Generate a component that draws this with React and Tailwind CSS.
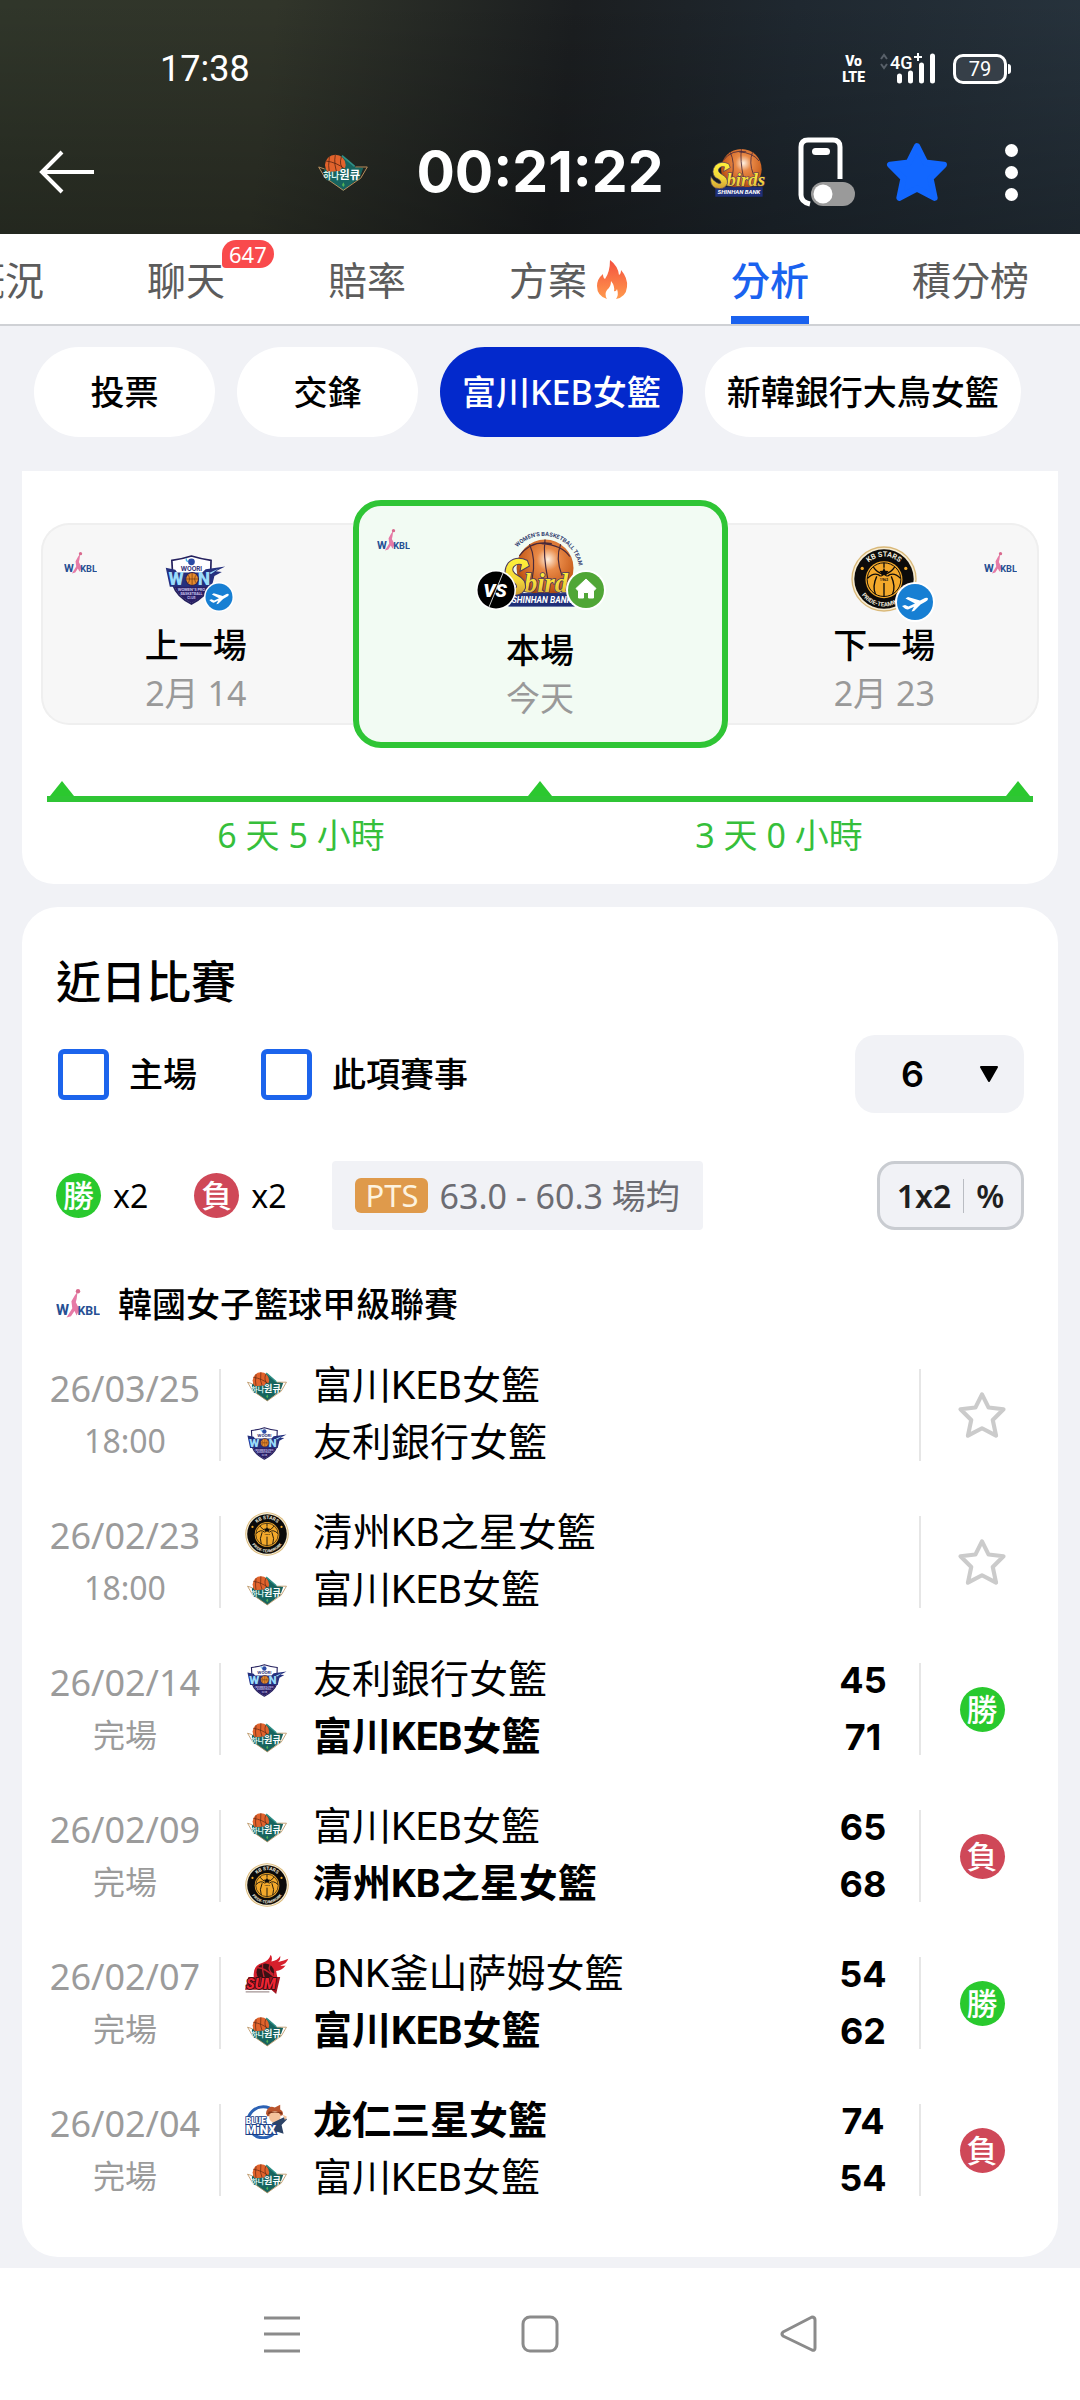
import React from "react";

const NAME_FONT = "font-[Roboto,'Noto_Sans_CJK_TC',sans-serif]";
const SCORE_FONT = "font-[Inter,sans-serif]";

/* ---------- logos ---------- */

function HanaLogo({ className }) {
  return (
    <svg viewBox="0 0 150 116" className={className} aria-hidden="true">
      <path d="M18 52 L60 8 L78 12 L112 42 L136 44 L124 78 L112 84 L76 113 L36 84 L22 74Z" fill="#17645f" />
      <path d="M20 48 L2 42 L22 76 L36 84 L76 112 L116 84 L128 76 L148 42 L112 42" fill="none" stroke="#b98f5c" strokeWidth="3" />
      <path d="M72 8 L110 40" stroke="#2f8f86" strokeWidth="5" />
      <circle cx="52" cy="36" r="31" fill="#e2632c" />
      <path d="M52 5 Q46 36 60 66 M24 24 Q56 28 80 48 M34 12 Q30 40 34 58 M70 12 Q62 36 78 50" stroke="#5b2512" strokeWidth="2.5" fill="none" />
      <path d="M18 58 L66 54 L70 46 L128 44 L120 82 L26 82Z" fill="#17645f" />
      <text x="16" y="79" fontSize="26" fontWeight="700" fill="#d9f3ee" fontFamily="'Noto Sans CJK KR', sans-serif">하나</text>
      <text x="64" y="79" fontSize="34" fontWeight="700" fill="#ffffff" fontFamily="'Noto Sans CJK KR', sans-serif">원큐</text>
      <path d="M76 88 l4 8 -4 6 -4 -6Z" fill="#52b557" />
    </svg>
  );
}

function WooriLogo({ className }) {
  return (
    <svg viewBox="0 0 180 148" className={className} aria-hidden="true">
      <path d="M20 16 Q50 12 78 3 Q108 12 136 16 L134 90 Q122 122 78 145 Q34 122 24 90Z" fill="#ffffff" stroke="#25215e" strokeWidth="5" />
      <path d="M24 86 L134 86 Q122 122 78 143 Q36 122 24 86Z" fill="#2a1f66" />
      <circle cx="78" cy="20" r="10" fill="#2a4aa5" />
      <path d="M68 20 Q60 16 64 10" stroke="#4ab4e8" strokeWidth="4" fill="none" />
      <text x="78" y="46" fontSize="18" fontWeight="700" textAnchor="middle" fill="#2a2a74" fontFamily="Inter, sans-serif">WOORI</text>
      <path d="M2 38 L30 44 L36 52 L110 52 L120 42 L178 34 L150 48 L168 50 L146 62 L138 94 L14 94Z" fill="#25307e" />
      <text x="10" y="90" fontSize="52" fontWeight="900" fill="#9bdcfb" fontFamily="Roboto, sans-serif">W</text>
      <text x="97" y="90" fontSize="52" fontWeight="900" fill="#9bdcfb" fontFamily="Roboto, sans-serif">N</text>
      <path d="M130 53 L158 41 L136 56Z" fill="#9bdcfb" />
      <circle cx="80" cy="71" r="19" fill="#e58a2c" stroke="#25215e" strokeWidth="3" />
      <path d="M61 71 H99 M80 52 V90 M67 58 Q78 71 67 84 M93 58 Q82 71 93 84" stroke="#6b3412" strokeWidth="2" fill="none" />
      <text x="78" y="108" fontSize="11" fontWeight="700" textAnchor="middle" fill="#c9c6ee" fontFamily="Inter, sans-serif">WOMEN'S PRO</text>
      <text x="78" y="119" fontSize="10" fontWeight="700" textAnchor="middle" fill="#c9c6ee" fontFamily="Inter, sans-serif">BASKETBALL</text>
      <text x="78" y="130" fontSize="9" fontWeight="700" textAnchor="middle" fill="#c9c6ee" fontFamily="Inter, sans-serif">CLUB</text>
    </svg>
  );
}

function KbStarsLogo({ className, id }) {
  return (
    <svg viewBox="0 0 200 200" className={className} aria-hidden="true">
      <defs>
        <path id={id + "t"} d="M32 100 A68 68 0 0 1 168 100" />
        <path id={id + "b"} d="M17 100 A83 83 0 0 0 183 100" />
      </defs>
      <circle cx="100" cy="100" r="99" fill="#d9b878" />
      <circle cx="100" cy="100" r="95" fill="#f7ecd2" />
      <circle cx="100" cy="100" r="90" fill="#0c0b0a" />
      <text fontSize="22" fontWeight="700" fill="#efe9dc" fontFamily="Roboto, sans-serif" textAnchor="middle">
        <textPath href={"#" + id + "t"} startOffset="50%">KB STARS</textPath>
      </text>
      <text fontSize="18" fontWeight="700" fill="#efe9dc" fontFamily="Roboto, sans-serif" textAnchor="middle">
        <textPath href={"#" + id + "b"} startOffset="50%">PRIDE-TEAMWORK</textPath>
      </text>
      <circle cx="34" cy="68" r="5" fill="#f3a92b" />
      <circle cx="166" cy="68" r="5" fill="#f3a92b" />
      <circle cx="100" cy="102" r="56" fill="#f3a92b" />
      <circle cx="100" cy="102" r="51" fill="none" stroke="#0c0b0a" strokeWidth="3" />
      <path d="M100 51 V66 M100 112 V153 M68 64 Q78 80 98 86 M132 64 Q122 80 102 86 M50 98 Q72 76 90 92 M150 98 Q128 76 110 92 M74 146 Q64 122 78 92 M126 146 Q136 122 122 92" stroke="#0c0b0a" strokeWidth="4" fill="none" />
      <path d="M100 66 l4 9 10 1 -7 7 2 10 -9 -5 -9 5 2 -10 -7 -7 10 -1Z" fill="#0c0b0a" />
      <text x="100" y="105" fontSize="11" fontWeight="700" textAnchor="middle" fill="#0c0b0a" fontFamily="Roboto, sans-serif">1963</text>
    </svg>
  );
}

function SbirdsLogo({ className, id, ring }) {
  return (
    <svg viewBox={ring ? "0 0 245 236" : "0 26 232 210"} className={className} aria-hidden="true">
      <defs>
        <radialGradient id={id + "g"} cx="55%" cy="35%" r="65%">
          <stop offset="0" stopColor="#fff1e2" />
          <stop offset="0.3" stopColor="#e98a48" />
          <stop offset="0.8" stopColor="#c65a18" />
          <stop offset="1" stopColor="#8e3d10" />
        </radialGradient>
        <linearGradient id={id + "y"} x1="0" y1="0" x2="0" y2="1">
          <stop offset="0" stopColor="#fff23a" />
          <stop offset="0.6" stopColor="#f2d63a" />
          <stop offset="1" stopColor="#cf9d33" />
        </linearGradient>
        <path id={id + "a"} d="M40 66 A106 106 0 0 1 231 124" />
      </defs>
      {ring && (
        <text fontSize="17" fontWeight="700" fill="#33406f" fontFamily="Roboto, sans-serif" textAnchor="middle">
          <textPath href={"#" + id + "a"} startOffset="50%">WOMEN'S BASKETBALL TEAM</textPath>
        </text>
      )}
      <circle cx="130" cy="118" r="84" fill={"url(#" + id + "g)"} />
      <path d="M130 34 Q124 80 138 150 M84 48 Q104 90 92 150 M176 48 Q160 90 180 140 M54 82 Q90 34 150 46 M203 84 Q180 50 120 46" stroke="#4a2a3a" strokeWidth="3.5" fill="none" />
      <rect x="22" y="192" width="196" height="40" fill="#1f2f78" />
      <text x="120" y="221" fontSize="25" fontWeight="700" fontStyle="italic" textAnchor="middle" fill="#ffffff" fontFamily="Roboto, sans-serif">SHINHAN BANK</text>
      <text x="68" y="189" fontSize="78" fontWeight="700" fontStyle="italic" fill={"url(#" + id + "y)"} stroke="#4d3b5c" strokeWidth="5" paintOrder="stroke" fontFamily="'Liberation Serif', serif">birds</text>
      <path d="M78 96 Q46 80 22 102 Q2 130 22 152 Q46 162 46 174 Q40 182 26 172 Q10 162 4 148 Q-2 184 22 196 Q60 206 72 178 Q76 154 50 140 Q28 128 38 114 Q46 104 60 108 L56 128 L84 112Z" fill={"url(#" + id + "y)"} stroke="#4d3b5c" strokeWidth="3" />
    </svg>
  );
}

function SumLogo({ className }) {
  return (
    <svg viewBox="0 0 130 120" className={className} aria-hidden="true">
      <path d="M26 68 Q22 34 52 26 Q70 20 76 2 Q82 10 78 22 Q96 20 104 6 Q106 16 98 24 Q116 20 128 14 Q122 30 104 34 Q112 36 120 34 Q108 50 92 50 L96 72Z" fill="#d61f2c" />
      <circle cx="60" cy="54" r="26" fill="#3a1114" />
      <path d="M36 40 Q60 42 84 66 M52 28 Q50 54 60 78 M74 32 Q66 50 84 60" stroke="#c51f2c" strokeWidth="4" fill="none" />
      <path d="M10 68 L104 68 L92 118 L78 106 L0 106Z" fill="#a3131f" />
      <text x="3" y="102" fontSize="42" fontWeight="900" fontStyle="italic" fill="#ee2433" stroke="#1a0d0e" strokeWidth="4" paintOrder="stroke" fontFamily="Roboto, sans-serif">SUM</text>
      <path d="M2 112 H72" stroke="#8d7a7a" strokeWidth="3" />
    </svg>
  );
}

function BlueMinxLogo({ className }) {
  return (
    <svg viewBox="0 0 130 106" className={className} aria-hidden="true">
      <circle cx="54" cy="54" r="46" fill="#ffffff" stroke="#2c62b4" strokeWidth="9" />
      <path d="M62 28 Q66 2 88 10 L104 2 L104 16 Q116 22 110 34 L66 36Z" fill="#b9542c" />
      <circle cx="88" cy="38" r="17" fill="#f4c39c" />
      <path d="M66 32 Q88 18 112 32 L108 24 L70 22Z" fill="#7f3419" />
      <path d="M80 56 L118 38 L124 46 L108 62 L114 88 L84 78Z" fill="#2d4366" />
      <path d="M112 32 l12 6 -6 10Z" fill="#f4c39c" />
      <text x="2" y="60" fontSize="25" fontWeight="900" fill="#ffffff" stroke="#1c3f86" strokeWidth="5" paintOrder="stroke" fontFamily="Roboto, sans-serif">BLUE</text>
      <text x="2" y="88" fontSize="36" fontWeight="900" fill="#ffffff" stroke="#1c3f86" strokeWidth="6" paintOrder="stroke" fontFamily="Roboto, sans-serif">MiNX</text>
    </svg>
  );
}

function WkblLogo({ className }) {
  return (
    <svg viewBox="0 0 100 66" className={className} aria-hidden="true">
      <text x="0" y="60" fontSize="34" fontWeight="700" fill="#264f93" fontFamily="Roboto, sans-serif">W</text>
      <path d="M24 65 L37 44 L35 28 L43 14 L49 6 L47 22 L45 30 L53 46 L47 60 L42 50 L34 62Z" fill="#e67aa6" />
      <circle cx="50" cy="5" r="5" fill="#d96a8e" />
      <text x="49" y="60" fontSize="28" fontWeight="700" fill="#264f93" fontFamily="Roboto, sans-serif">KBL</text>
    </svg>
  );
}

/* ---------- icons ---------- */

function Star({ className, ...rest }) {
  return (
    <svg viewBox="0 0 60 58" className={className} strokeLinejoin="round" aria-hidden="true" {...rest}>
      <path d="M30 4 L38 20 L56 22 L43 35 L47 54 L30 45 L13 54 L17 35 L4 22 L22 20Z" />
    </svg>
  );
}

function PlaneBadge({ className }) {
  return (
    <svg viewBox="0 0 40 40" className={className} aria-hidden="true">
      <circle cx="20" cy="20" r="20" fill="#ffffff" />
      <circle cx="20" cy="20" r="18" fill="#177fd3" />
      <path d="M7 24 L10 23 L13.500 24.500 L20 21.500 L10.500 16.500 L13 15 L25 18.500 L30 16 Q33 15 33 17 Q33 18.500 30 20 L25.500 22.500 L19 29 L16.500 29.500 L19 24.800 L13 27.500 Q11 28 7 24Z" fill="#ffffff" />
    </svg>
  );
}

function HomeBadge({ className }) {
  return (
    <svg viewBox="0 0 40 40" className={className} aria-hidden="true">
      <circle cx="20" cy="20" r="20" fill="#ffffff" />
      <circle cx="20" cy="20" r="18" fill="#50a636" />
      <path d="M20 9 L30 18.500 L27.500 21 V28 H22.500 V22.500 H17.500 V28 H12.500 V21 L10 18.500Z" fill="#ffffff" stroke="#ffffff" strokeLinejoin="round" />
    </svg>
  );
}

function VsBadge({ className }) {
  return (
    <svg viewBox="0 0 40 40" className={className} aria-hidden="true">
      <circle cx="20" cy="20" r="20" fill="#ffffff" />
      <circle cx="20" cy="20" r="18.500" fill="#000000" />
      <text x="19" y="27" fontSize="19" fontWeight="900" fontStyle="italic" textAnchor="middle" fill="#ffffff" fontFamily="Roboto, sans-serif">VS</text>
      <path d="M27 3 L13 37" stroke="#ffffff" strokeWidth="0.800" />
    </svg>
  );
}

function Flame({ className }) {
  return (
    <svg viewBox="0 0 32 40" className={className} aria-hidden="true">
      <defs>
        <linearGradient id="flame" x1="0" y1="0" x2="0" y2="1">
          <stop offset="0" stopColor="#f4503f" />
          <stop offset="1" stopColor="#ff9a4d" />
        </linearGradient>
      </defs>
      <path d="M14 0 Q22 6 23 15 Q25 14 25 10 Q32 18 31 27 Q30 37 20 39 Q23 35 21 29 Q20 32 18 31 Q19 26 15 21 Q15 27 11 30 Q8 34 11 39 Q1 36 1 26 Q1 19 7 14 Q7 18 9 19 Q14 12 14 0Z" fill="url(#flame)" />
    </svg>
  );
}

/* ---------- data ---------- */

const HANA = { name: "富川KEB女籃", logo: (id) => <HanaLogo className="w-10" /> };
const WOORI = { name: "友利銀行女籃", logo: (id) => <WooriLogo className="w-10" /> };
const KB = { name: "清州KB之星女籃", logo: (id) => <KbStarsLogo id={id} className="w-11" /> };
const BNK = { name: "BNK釜山萨姆女籃", logo: (id) => <SumLogo className="w-11" /> };
const MINX = { name: "龙仁三星女籃", logo: (id) => <BlueMinxLogo className="w-11" /> };

const MATCHES = [
  { date: "26/03/25", status: "18:00", teams: [HANA, WOORI] },
  { date: "26/02/23", status: "18:00", teams: [KB, HANA] },
  { date: "26/02/14", status: "完場", teams: [WOORI, HANA], scores: [45, 71], result: "勝" },
  { date: "26/02/09", status: "完場", teams: [HANA, KB], scores: [65, 68], result: "負" },
  { date: "26/02/07", status: "完場", teams: [BNK, HANA], scores: [54, 62], result: "勝" },
  { date: "26/02/04", status: "完場", teams: [MINX, HANA], scores: [74, 54], result: "負" },
];

/* ---------- sections ---------- */

function StatusBar() {
  return (
    <div className="flex h-[90px] items-center pt-[48px] pr-[69px] pl-[160px]">
      <span className="font-[Roboto,sans-serif] text-[36px] leading-[42px]">17:38</span>
      <div className="ml-auto flex items-center">
        <div className="flex flex-col text-center font-[Roboto,sans-serif] text-[14px] leading-[16px] font-black">
          <span>Vo</span>
          <span>LTE</span>
        </div>
        <svg viewBox="0 0 56 32" className="ml-[15px] h-8 w-14 overflow-visible" aria-hidden="true">
          <path d="M1 6 L4 2 L7 6 M1 11 L4 15 L7 11" stroke="#59616a" strokeWidth="2" fill="none" />
          <text x="10" y="16" fontSize="18" fontWeight="500" fill="#ffffff" fontFamily="Roboto, sans-serif">4G</text>
          <path d="M34 4 H42 M38 0 V8" stroke="#ffffff" strokeWidth="2" />
          <path d="M19.500 23 V28 M30.500 20 V28 M41.500 12 V28 M52.500 3 V28" stroke="#ffffff" strokeWidth="5" strokeLinecap="round" />
        </svg>
        <div className="ml-[17px] flex h-[30px] w-[54px] items-center justify-center rounded-[10px] border-[3px] border-white bg-[#363f48] font-[Roboto,sans-serif] text-[20px] leading-[24px]">79</div>
        <div className="ml-px h-[10px] w-[3px] rounded-r bg-white" />
      </div>
    </div>
  );
}

function Header() {
  return (
    <header className="h-[234px] bg-[linear-gradient(180deg,#00000000_0%,#00000044_100%),linear-gradient(97deg,#30362a_0%,#31352a_25%,#1b1e20_52%,#1f2830_72%,#27333d_100%)] text-white">
      <StatusBar />
      <div className="grid h-[164px] grid-cols-[1fr_auto_1fr] items-center">
        <div className="flex items-center justify-between pr-[48px] pl-[38px]">
          <button type="button" aria-label="返回">
            <svg viewBox="0 0 58 48" className="h-12 w-[58px]" fill="none" stroke="#ffffff" strokeWidth="4" aria-hidden="true">
              <path d="M24 4 L4 24 L24 44 M6 24 H56" />
            </svg>
          </button>
          <HanaLogo className="w-[50px]" />
        </div>
        <div className={SCORE_FONT + " text-[57px] leading-[60px] font-bold"}>00:21:22</div>
        <div className="flex items-center pl-[46px]">
          <SbirdsLogo id="sh" className="w-[56px]" />
          <button type="button" aria-label="浮動視窗" className="ml-[32px]">
            <svg viewBox="0 0 58 70" className="h-[70px] w-[58px]" aria-hidden="true">
              <path d="M42 42 V10 Q42 3 35 3 H10 Q3 3 3 10 V58 Q3 65 12 67" fill="none" stroke="#ffffff" strokeWidth="5" />
              <rect x="14" y="11" width="18" height="7" rx="3.500" fill="#ffffff" />
              <rect x="13" y="45" width="44" height="24" rx="12" fill="#9a9a9a" />
              <circle cx="25" cy="57" r="9.500" fill="#ffffff" />
            </svg>
          </button>
          <button type="button" aria-label="收藏" className="ml-[30px]">
            <Star className="h-[60px] w-[62px]" fill="#1267ff" stroke="#1267ff" strokeWidth="6" />
          </button>
          <button type="button" aria-label="更多" className="ml-[44px] flex w-10 flex-col items-center gap-[9px]">
            <span className="size-[13px] rounded-full bg-white" />
            <span className="size-[13px] rounded-full bg-white" />
            <span className="size-[13px] rounded-full bg-white" />
          </button>
        </div>
      </div>
    </header>
  );
}

function Tabs() {
  const base = "relative flex h-[90px] shrink-0 items-center pt-[2px] whitespace-nowrap";
  return (
    <nav className="overflow-hidden border-b-2 border-[#cfd1d5] bg-white text-[39px] leading-[56px] text-[#5c5c5c]">
      <div className="-ml-[34px] flex gap-[103px]">
        <a href="#overview" className={base}>概況</a>
        <a href="#chat" className={base}>
          聊天
          <span className="absolute top-[6px] left-[75px] flex h-[28px] items-center rounded-[14px] rounded-bl-[4px] bg-[#f94a4c] px-[7px] text-[22px] leading-[28px] text-white">647</span>
        </a>
        <a href="#odds" className={base}>賠率</a>
        <a href="#tips" className={base + " gap-[9px]"}>方案<Flame className="h-10 w-8" /></a>
        <a href="#analysis" aria-current="page" className="relative flex h-[90px] shrink-0 items-center border-b-8 border-[#1a62ef] pt-[10px] font-medium whitespace-nowrap text-[#1a62ef]">分析</a>
        <a href="#standings" className={base}>積分榜</a>
      </div>
    </nav>
  );
}

function Chips() {
  const base = "h-[90px] min-w-[181px] shrink-0 rounded-full bg-white px-[22px] text-black";
  return (
    <div className="flex gap-[22px] overflow-hidden pt-[21px] pl-[34px] text-[34px] leading-[48px] font-medium whitespace-nowrap">
      <button type="button" className={base}>投票</button>
      <button type="button" className={base}>交鋒</button>
      <button type="button" aria-pressed="true" className="h-[90px] shrink-0 rounded-full bg-[#0329cc] px-[22px] text-white">富川KEB女籃</button>
      <button type="button" className={base}>新韓銀行大鳥女籃</button>
    </div>
  );
}

function Schedule() {
  const side = "relative flex h-[202px] flex-1 flex-col items-center border-2 border-[#efefef] bg-[#f7f7f7]";
  const title = "text-[34px] leading-[48px] font-medium text-black";
  const when = "text-[34px] leading-[48px] text-[#999]";
  return (
    <section className="mx-[22px] mt-[34px] rounded-b-[32px] bg-white px-[19px] pt-[29px] pb-[25px]">
      <div className="flex items-center">
        <div className={side + " rounded-l-[28px] border-r-0 pr-[4px]"}>
          <WkblLogo className="absolute top-[27px] left-[21px] w-[33px]" />
          <div className="relative mt-[30px] mb-[16px]">
            <WooriLogo className="h-[50px] w-[61px]" />
            <PlaneBadge className="absolute top-[27px] left-[39px] w-[30px]" />
          </div>
          <div className={title}>上一場</div>
          <div className={when}>2月 14</div>
        </div>
        <div className="relative flex h-[248px] w-[375px] flex-col items-center rounded-[28px] border-[6px] border-[#2fc535] bg-[#f2fbf3]">
          <WkblLogo className="absolute top-[23px] left-[18px] w-[33px]" />
          <div className="relative mt-[22px] mb-[18px] pl-[4px]">
            <SbirdsLogo id="sc" ring className="h-[80px] w-[83px]" />
            <VsBadge className="absolute top-[42px] -left-[21px] w-[40px]" />
            <HomeBadge className="absolute top-[42px] left-[69px] w-[40px]" />
          </div>
          <div className={title}>本場</div>
          <div className={when}>今天</div>
        </div>
        <div className={side + " rounded-r-[28px] border-l-0 pl-[4px]"}>
          <WkblLogo className="absolute top-[27px] right-[20px] w-[33px]" />
          <div className="relative mt-[21px] mb-[9px]">
            <KbStarsLogo id="kc" className="size-[66px]" />
            <PlaneBadge className="absolute top-[36px] left-[44px] w-[40px]" />
          </div>
          <div className={title}>下一場</div>
          <div className={when}>2月 23</div>
        </div>
      </div>
      <div className="mx-[6px] mt-[33px] flex items-end justify-between border-b-[6px] border-[#2fc535]">
        {[0, 1, 2].map((i) => (
          <svg key={i} viewBox="0 0 30 15" className="h-[15px] w-[30px]" aria-hidden="true">
            <path d="M15 0 L27 15 H3Z" fill="#2bc82f" />
          </svg>
        ))}
      </div>
      <div className="mx-[21px] mt-[9px] grid grid-cols-2 text-center text-[34px] leading-[48px] text-[#36bf3b]">
        <span>6 天 5 小時</span>
        <span>3 天 0 小時</span>
      </div>
    </section>
  );
}

function ResultBadge({ value }) {
  return (
    <span
      className={
        "flex size-[45px] items-center justify-center rounded-full text-[31px] leading-[45px] font-medium text-white " +
        (value === "勝" ? "bg-[#29c92e]" : "bg-[#cf4858]")
      }
    >
      {value}
    </span>
  );
}

function CheckOption({ label }) {
  return (
    <label className="flex items-center gap-[20px]">
      <input type="checkbox" className="size-[51px] appearance-none rounded-[6px] border-[5px] border-[#1c64ec] bg-white checked:bg-[#1c64ec]" />
      {label}
    </label>
  );
}

function MatchRow({ match, index }) {
  return (
    <li className="flex items-center pr-[15px] pl-[9px]">
      <div className="flex h-[92px] w-[190px] flex-col items-center justify-center border-r-2 border-[#e6e6e6] text-[#9b9b9b]">
        <span className="text-[36px] leading-[52px]">{match.date}</span>
        <span className="text-[32px] leading-[52px]">{match.status}</span>
      </div>
      <div className="flex-1">
        {match.teams.map((team, i) => {
          const won = match.scores && match.scores[i] > match.scores[1 - i];
          return (
            <div key={team.name} className="flex h-[57px] items-center pl-[24px]">
              <span className="flex w-11 justify-center">{team.logo("m" + index + i)}</span>
              <span className={NAME_FONT + " ml-[24px] flex-1 text-[39px] leading-[57px] whitespace-nowrap " + (won ? "font-bold" : "")}>{team.name}</span>
              {match.scores && (
                <span className={SCORE_FONT + " mr-[6px] w-[100px] text-center text-[36px] leading-[57px] font-bold"}>{match.scores[i]}</span>
              )}
            </div>
          );
        })}
      </div>
      <div className="flex h-[92px] w-[124px] items-center justify-center border-l-2 border-[#e6e6e6]">
        {match.result ? (
          <ResultBadge value={match.result} />
        ) : (
          <button type="button" aria-label="收藏賽事">
            <Star className="h-12 w-[50px]" fill="none" stroke="#cbcbcb" strokeWidth="5" />
          </button>
        )}
      </div>
    </li>
  );
}

function RecentMatches() {
  return (
    <section className="mx-[22px] mt-[23px] rounded-[36px] bg-white pt-[42px] pb-[50px] text-black">
      <div className="px-[34px] text-[34px] leading-[48px]">
        <h2 className="text-[45px] leading-[66px] font-medium">近日比賽</h2>
        <div className="mt-[20px] flex items-center gap-[64px] pl-[2px] font-medium">
          <CheckOption label="主場" />
          <CheckOption label="此項賽事" />
          <div className="relative ml-auto">
            <select aria-label="場數" defaultValue="6" className="h-[78px] w-[169px] appearance-none rounded-[20px] bg-[#f1f2f6] pl-[46px] font-[Inter,sans-serif] text-[36px] leading-[48px] font-semibold">
              <option>6</option>
              <option>10</option>
            </select>
            <svg viewBox="0 0 20 16" className="pointer-events-none absolute top-[31px] right-[25px] h-4 w-5" aria-hidden="true">
              <path d="M2 1 H18 L10 15Z" fill="#000000" stroke="#000000" strokeWidth="2" strokeLinejoin="round" />
            </svg>
          </div>
        </div>
        <div className="mt-[48px] flex items-center">
          <ResultBadge value="勝" />
          <span className="ml-[12px] text-[32px]">x2</span>
          <span className="ml-[46px]"><ResultBadge value="負" /></span>
          <span className="ml-[12px] text-[32px]">x2</span>
          <div className="ml-[46px] flex h-[69px] items-center rounded-[4px] bg-[#f1f2f6] px-[23px] text-[#6c6c72]">
            <span className="mr-[11px] rounded-[6px] bg-[#df9a4b] px-[10px] text-[31px] leading-[35px] text-[#fdf3df]">PTS</span>
            <span>63.0 - 60.3 場均</span>
          </div>
          <button type="button" className="ml-auto flex h-[69px] w-[147px] items-center justify-center rounded-[18px] border-[3px] border-[#c9ccd1] bg-[#f1f2f6] text-[32px] font-semibold text-[#1f1f1f]">
            1x2
            <span className="mx-[12px] h-[34px] w-px bg-[#b9bcc2]" />
            <span>%</span>
          </button>
        </div>
        <div className="mt-[50px] flex items-center font-medium">
          <WkblLogo className="w-[44px]" />
          <span className="ml-[18px]">韓國女子籃球甲級聯賽</span>
        </div>
      </div>
      <ul className="mt-[30px] flex flex-col gap-[33px]">
        {MATCHES.map((m, i) => (
          <MatchRow key={m.date} match={m} index={i} />
        ))}
      </ul>
    </section>
  );
}

function SystemNav() {
  const svg = { viewBox: "0 0 40 40", fill: "none", stroke: "#8b8b8b", strokeWidth: 3, strokeLinejoin: "round" };
  return (
    <nav className="mt-[11px] flex h-[132px] items-center justify-center gap-[218px] bg-white">
      <button type="button" aria-label="最近任務"><svg {...svg} className="size-10"><path d="M2 4 H38 M2 20 H38 M2 37 H38" /></svg></button>
      <button type="button" aria-label="主畫面"><svg {...svg} className="size-10"><rect x="3" y="3" width="34" height="34" rx="7" /></svg></button>
      <button type="button" aria-label="返回上一頁"><svg {...svg} className="size-10"><path d="M34 3 Q37 3 37 6 V34 Q37 37 34 36 L5 22 Q3 20 5 18Z" /></svg></button>
    </nav>
  );
}

export default function App() {
  return (
    <div className="min-h-screen overflow-hidden bg-[#f1f2f6] font-['Noto_Sans','Noto_Sans_CJK_TC',sans-serif]" lang="zh-Hant">
      <Header />
      <Tabs />
      <Chips />
      <Schedule />
      <RecentMatches />
      <SystemNav />
    </div>
  );
}
